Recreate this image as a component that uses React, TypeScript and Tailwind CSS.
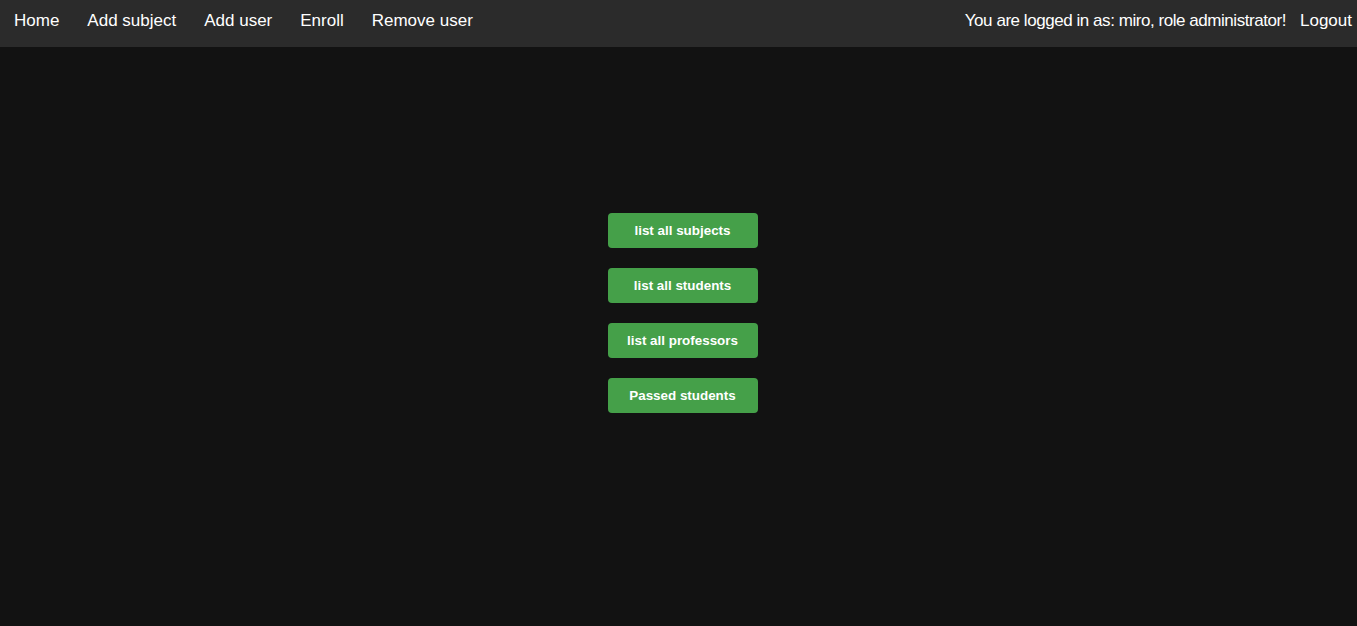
import React from "react";

export default function App() {
  const links = ["Home", "Add subject", "Add user", "Enroll", "Remove user"];
  const buttons = ["list all subjects", "list all students", "list all professors", "Passed students"];
  return (
    <div className="min-h-[626px] w-full bg-[#121212] font-['Liberation_Sans',Arial,sans-serif]">
      <nav className="flex h-[47px] items-start justify-between bg-[#2b2b2b] pt-[11px] text-[17px] text-white">
        <div className="flex items-center">
          {links.map((l) => (
            <a key={l} className="px-[14px] leading-[20px] cursor-pointer">{l}</a>
          ))}
        </div>
        <div className="flex items-center pr-[5px]">
          <span className="leading-[20px] tracking-[-0.45px]">You are logged in as: miro, role administrator!</span>
          <a className="pl-[14px] leading-[20px] cursor-pointer">Logout</a>
        </div>
      </nav>
      <main className="flex flex-col items-center gap-[20px] pl-[8px] pt-[166px]">
        {buttons.map((b) => (
          <button
            key={b}
            className="flex h-[35px] w-[150px] items-center justify-center rounded-[4px] bg-[#45a049] pt-[1px] text-[13.4px] font-bold text-white"
          >
            {b}
          </button>
        ))}
      </main>
    </div>
  );
}
